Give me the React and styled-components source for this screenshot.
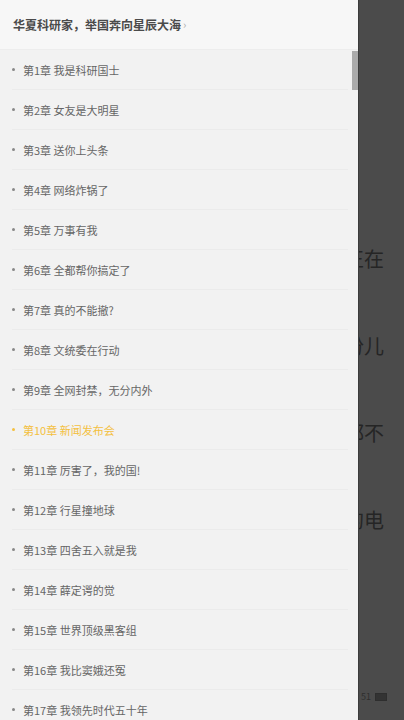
import React from 'react';
import styled, { createGlobalStyle } from 'styled-components';

const GlobalStyle = createGlobalStyle`
  html, body {
    margin: 0;
    padding: 0;
    background: #4b4b4b;
  }
  body {
    font-family: "Noto Sans CJK SC", "Noto Sans", sans-serif;
  }
`;

const chapters = [
  '第1章 我是科研国士',
  '第2章 女友是大明星',
  '第3章 送你上头条',
  '第4章 网络炸锅了',
  '第5章 万事有我',
  '第6章 全都帮你搞定了',
  '第7章 真的不能撤?',
  '第8章 文统委在行动',
  '第9章 全网封禁，无分内外',
  '第10章 新闻发布会',
  '第11章 厉害了，我的国!',
  '第12章 行星撞地球',
  '第13章 四舍五入就是我',
  '第14章 薛定谔的觉',
  '第15章 世界顶级黑客组',
  '第16章 我比窦娥还冤',
  '第17章 我领先时代五十年',
];

const current = 9;

const behindLines = ['正在', '一份儿', '都不', '的电'];

const Screen = styled.div`
  width: 404px;
  height: 720px;
  display: flex;
  overflow: hidden;
  background: #4b4b4b;
`;

const Drawer = styled.aside`
  width: 358px;
  flex: none;
  display: flex;
  flex-direction: column;
  background: #f2f2f2;
  border-right: 1px solid #3c3c3c;
  position: relative;
`;

const Header = styled.div`
  height: 50px;
  flex: none;
  display: flex;
  align-items: center;
  padding-left: 13px;
  background: #f7f7f7;
  border-bottom: 1px solid #ededed;
  box-sizing: border-box;
`;

const Title = styled.span`
  font-size: 12px;
  font-weight: 700;
  color: #4a4a4a;
`;

const Chevron = styled.span`
  font-size: 11px;
  color: #aaa;
  margin-left: 2px;
  margin-top: -1px;
`;

const List = styled.ul`
  list-style: none;
  margin: 0;
  padding: 0;
  flex: 1;
  overflow: hidden;
`;

const Row = styled.li`
  height: 40px;
  margin: 0 10px 0 12px;
  display: flex;
  align-items: center;
  gap: 8px;
  border-bottom: 1px solid #ebebeb;
  box-sizing: border-box;
  font-size: 11px;
  color: ${(p) => (p.$active ? '#f4c040' : '#666')};
`;

const Dot = styled.span`
  width: 3px;
  height: 3px;
  border-radius: 50%;
  background: ${(p) => (p.$active ? '#f4c040' : '#888')};
  flex: none;
`;

const ScrollThumb = styled.div`
  position: absolute;
  right: 0;
  top: 51px;
  width: 6px;
  height: 39px;
  background: #aaa;
`;

const Behind = styled.div`
  flex: 1;
  display: flex;
  flex-direction: column;
  overflow: hidden;
  padding-top: 246px;
  gap: 62px;
`;

const BehindLine = styled.div`
  display: flex;
  justify-content: flex-end;
  padding-right: 20px;
  font-size: 20px;
  line-height: 25px;
  color: #252525;
  white-space: nowrap;
`;

const StatusBar = styled.div`
  margin-top: auto;
  margin-bottom: 17px;
  display: flex;
  align-items: center;
  gap: 4px;
  padding-left: 2px;
  font-size: 9px;
  color: #2e2e2e;
`;

const Battery = styled.span`
  width: 10px;
  height: 6px;
  border: 1px solid #2e2e2e;
  background: #333;
`;

export default function App() {
  return (
    <>
      <GlobalStyle />
      <Screen>
        <Drawer>
          <Header>
            <Title>华夏科研家，举国奔向星辰大海</Title>
            <Chevron>›</Chevron>
          </Header>
          <List>
            {chapters.map((c, i) => (
              <Row key={c} $active={i === current}>
                <Dot $active={i === current} />
                {c}
              </Row>
            ))}
          </List>
          <ScrollThumb />
        </Drawer>
        <Behind>
          {behindLines.map((l) => (
            <BehindLine key={l}>{l}</BehindLine>
          ))}
          <StatusBar>
            51
            <Battery />
          </StatusBar>
        </Behind>
      </Screen>
    </>
  );
}
